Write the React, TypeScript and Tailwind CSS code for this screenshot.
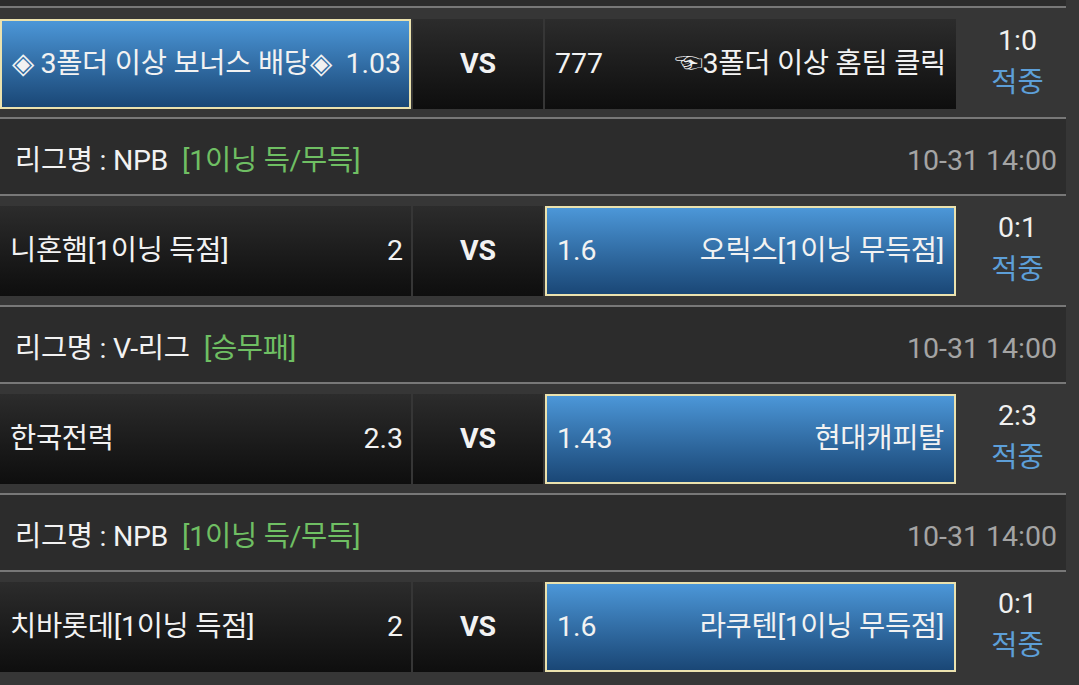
import React from "react";

type Side = { name: string; odds: string };
type Match = {
  home: Side;
  away: Side;
  pick: "home" | "away";
  score: string;
  result: string;
};
type Group = { league: string; market: string; time: string; match: Match };

const GROUPS: Group[] = [
  {
    league: "NPB",
    market: "[1이닝 득/무득]",
    time: "10-31 14:00",
    match: {
      home: { name: "니혼햄[1이닝 득점]", odds: "2" },
      away: { name: "오릭스[1이닝 무득점]", odds: "1.6" },
      pick: "away",
      score: "0:1",
      result: "적중",
    },
  },
  {
    league: "V-리그",
    market: "[승무패]",
    time: "10-31 14:00",
    match: {
      home: { name: "한국전력", odds: "2.3" },
      away: { name: "현대캐피탈", odds: "1.43" },
      pick: "away",
      score: "2:3",
      result: "적중",
    },
  },
  {
    league: "NPB",
    market: "[1이닝 득/무득]",
    time: "10-31 14:00",
    match: {
      home: { name: "치바롯데[1이닝 득점]", odds: "2" },
      away: { name: "라쿠텐[1이닝 무득점]", odds: "1.6" },
      pick: "away",
      score: "0:1",
      result: "적중",
    },
  },
];

const DARK = "bg-linear-to-b from-[#2c2c2c] to-[#0e0e0e]";
const BLUE =
  "bg-linear-to-b from-[#4c97d8] to-[#1a4776] border-2 border-[#ebe2ae]";

function MatchRow({ m, className }: { m: Match; className: string }) {
  return (
    <div className={`flex h-[90px] ${className}`}>
      {/* home */}
      <div
        className={`w-[411px] flex items-center justify-between pl-[10px] pr-[8px] ${
          m.pick === "home" ? BLUE : DARK
        }`}
      >
        <span className="tracking-[-0.3px]">{m.home.name}</span>
        <span>{m.home.odds}</span>
      </div>
      {/* vs */}
      <div
        className={`ml-[2px] w-[130px] flex items-center justify-center font-bold ${DARK}`}
      >
        VS
      </div>
      {/* away */}
      <div
        className={`ml-[2px] w-[411px] flex items-center justify-between pl-[10px] pr-[10px] ${
          m.pick === "away" ? BLUE : DARK
        }`}
      >
        <span>{m.away.odds}</span>
        <span className="tracking-[-0.3px]">{m.away.name}</span>
      </div>
      {/* result */}
      <div className="flex-1 flex flex-col items-center justify-center leading-[42px] pb-[4px]">
        <span className="text-[#f0f0f0]">{m.score}</span>
        <span className="text-[#5d9fd8]">{m.result}</span>
      </div>
    </div>
  );
}

function LeagueHeader({ g }: { g: Group }) {
  return (
    <div className="w-[1066px] h-[79px] border-y-2 border-[#787878] bg-[#2c2c2c] flex items-center justify-between pl-[15px] pr-[9px] pt-[10px]">
      <div className="tracking-[-0.3px]">
        <span>리그명 : {g.league}</span>
        <span className="ml-[14px] text-[#6fbf63]">{g.market}</span>
      </div>
      <span className="text-[#a4a4a4]">{g.time}</span>
    </div>
  );
}

export default function App() {
  return (
    <div className="min-h-screen bg-[#363636] text-[#f2f2f2] text-[28.5px] font-['Roboto','Noto_Sans_CJK_KR',sans-serif] overflow-hidden">
      {/* tail of previous league header */}
      <div className="w-[1066px] h-[8px] bg-[#2c2c2c] border-b-2 border-[#787878]" />

      <MatchRow
        className="mt-[11px] mb-[8px]"
        m={{
          home: { name: "◈ 3폴더 이상 보너스 배당◈", odds: "1.03" },
          away: { name: "☜3폴더 이상 홈팀 클릭", odds: "777" },
          pick: "home",
          score: "1:0",
          result: "적중",
        }}
      />

      {GROUPS.map((g, i) => (
        <div key={i}>
          <LeagueHeader g={g} />
          <MatchRow className="mt-[10px] mb-[9px]" m={g.match} />
        </div>
      ))}
    </div>
  );
}
